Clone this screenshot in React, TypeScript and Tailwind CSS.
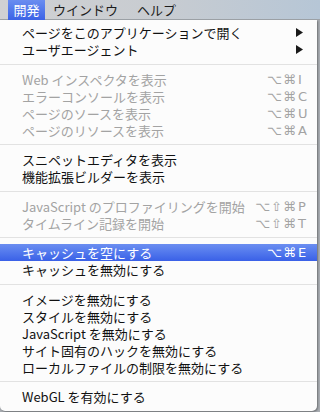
import React from 'react';

type Item =
  | { sep: true }
  | {
      sep?: false;
      label: string;
      mods?: string;
      keyChar?: string;
      disabled?: boolean;
      active?: boolean;
      submenu?: boolean;
    };

const items: Item[] = [
  { label: 'ページをこのアプリケーションで開く', submenu: true },
  { label: 'ユーザエージェント', submenu: true },
  { sep: true },
  { label: 'Web インスペクタを表示', mods: '⌥⌘', keyChar: 'I', disabled: true },
  { label: 'エラーコンソールを表示', mods: '⌥⌘', keyChar: 'C', disabled: true },
  { label: 'ページのソースを表示', mods: '⌥⌘', keyChar: 'U', disabled: true },
  { label: 'ページのリソースを表示', mods: '⌥⌘', keyChar: 'A', disabled: true },
  { sep: true },
  { label: 'スニペットエディタを表示' },
  { label: '機能拡張ビルダーを表示' },
  { sep: true },
  { label: 'JavaScript のプロファイリングを開始', mods: '⌥⇧⌘', keyChar: 'P', disabled: true },
  { label: 'タイムライン記録を開始', mods: '⌥⇧⌘', keyChar: 'T', disabled: true },
  { sep: true },
  { label: 'キャッシュを空にする', mods: '⌥⌘', keyChar: 'E', active: true },
  { label: 'キャッシュを無効にする' },
  { sep: true },
  { label: 'イメージを無効にする' },
  { label: 'スタイルを無効にする' },
  { label: 'JavaScript を無効にする' },
  { label: 'サイト固有のハックを無効にする' },
  { label: 'ローカルファイルの制限を無効にする' },
  { sep: true },
  { label: 'WebGL を有効にする' },
];

const MenuRow: React.FC<{ item: Item }> = ({ item }) => {
  if (item.sep) {
    return (
      <div className="h-[12.5px] flex items-center">
        <div className="h-px w-full bg-[#e2e2e2]" />
      </div>
    );
  }
  const color = item.active
    ? 'text-white'
    : item.disabled
    ? 'text-[#a3a3a3]'
    : 'text-[#111]';
  return (
    <div
      className={`h-[17px] leading-[17px] flex items-center pl-[22px] pr-[5px] ${color} ${
        item.active ? 'bg-gradient-to-b from-[#6b8ef1] to-[#3a60e7]' : ''
      }`}
    >
      <span className="whitespace-nowrap">{item.label}</span>
      {item.submenu && (
        <svg width="7" height="9" viewBox="0 0 7 9" className="ml-auto mr-[9px]">
          <path d="M0 0 L7 4.5 L0 9 Z" fill="#1a1a1a" />
        </svg>
      )}
      {item.keyChar && (
        <span className="ml-auto flex font-['DejaVu_Sans',sans-serif] text-[13px]">
          <span className="tracking-[1px]">{item.mods}</span>
          <span className="w-[15px] pl-[1px]">{item.keyChar}</span>
        </span>
      )}
    </div>
  );
};

export default function App() {
  return (
    <div className="w-[320px] h-[412px] overflow-hidden bg-[#a9adb2] font-['Noto_Sans_CJK_JP',sans-serif] text-[13px] leading-none">
      <div className="h-[20px] flex items-center bg-gradient-to-r from-[#d0d1d3] via-[#c8ccd1] to-[#b6c6d6] border-b border-[#9ea3a8] text-[13px] text-[#1c1c1c]">
        <div className="ml-[8px] h-[20px] w-[37px] flex items-center justify-center bg-gradient-to-b from-[#6a8df0] to-[#3b62e6] text-white">
          開発
        </div>
        <div className="ml-[8px]">ウインドウ</div>
        <div className="ml-[19px]">ヘルプ</div>
      </div>
      <div className="w-[317px] bg-[#fcfcfc] rounded-b-[5px] pt-[4px] pb-[6px] shadow-[1px_1px_2px_rgba(0,0,0,0.35)]">
        {items.map((item, i) => (
          <MenuRow key={i} item={item} />
        ))}
      </div>
    </div>
  );
}
